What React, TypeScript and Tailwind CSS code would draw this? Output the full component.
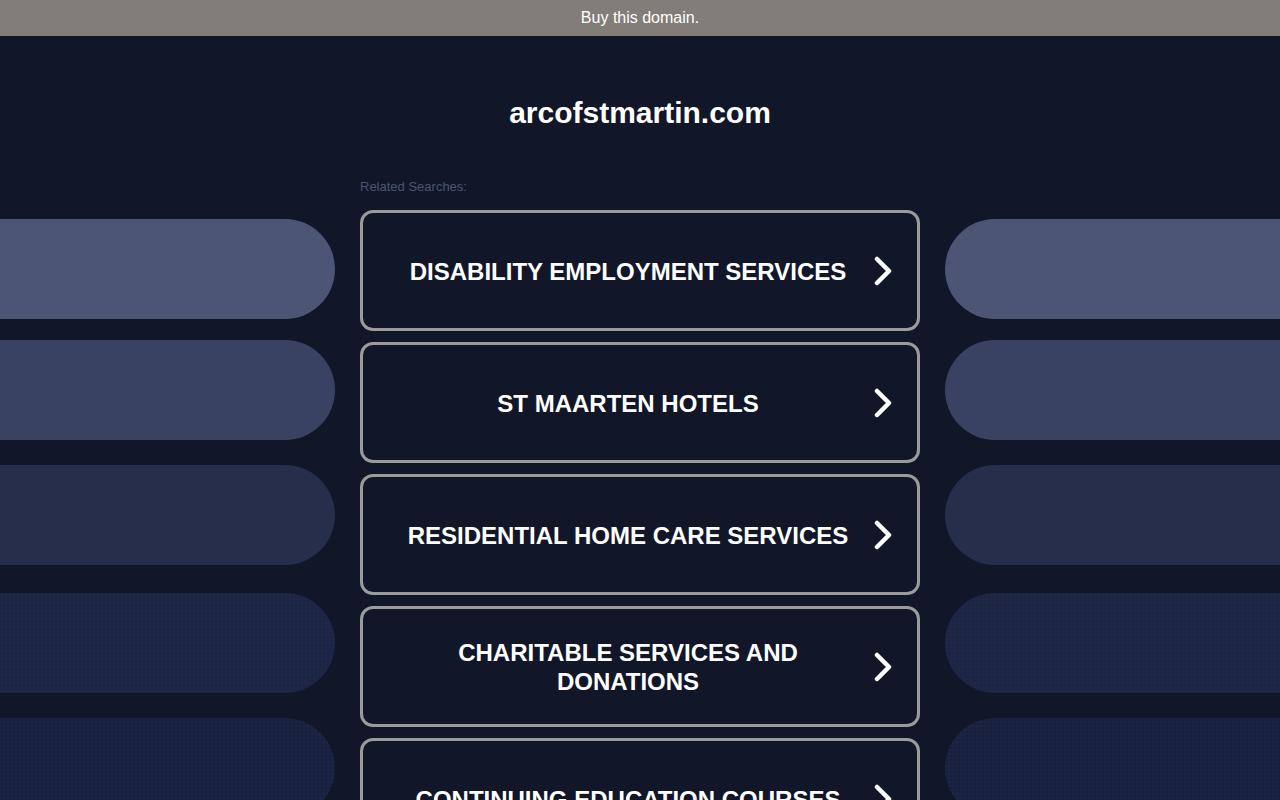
import React from "react";

const searches = [
  "DISABILITY EMPLOYMENT SERVICES",
  "ST MAARTEN HOTELS",
  "RESIDENTIAL HOME CARE SERVICES",
  "CHARITABLE SERVICES AND DONATIONS",
  "CONTINUING EDUCATION COURSES",
];

// side pills, top to bottom; spacing is uneven on purpose
const pills = [
  { mt: "mt-[40px]", bg: "bg-[#4c5674]" },
  { mt: "mt-[21px]", bg: "bg-[#3a4261]" },
  { mt: "mt-[25px]", bg: "bg-[#262e4c]" },
  {
    mt: "mt-[28px]",
    bg: "bg-[#1d2545] bg-[radial-gradient(#20284a_1px,transparent_1px)] bg-[length:4px_4px]",
  },
  {
    mt: "mt-[25px]",
    bg: "bg-[#1c2444] bg-[radial-gradient(#171e3a_1px,transparent_1px)] bg-[length:4px_4px]",
  },
];

const Chevron = () => (
  <svg width="20" height="30" viewBox="0 0 20 30" className="shrink-0">
    <polyline
      points="4,3 16,15 4,27"
      fill="none"
      stroke="white"
      strokeWidth="4.5"
      strokeLinecap="round"
      strokeLinejoin="round"
    />
  </svg>
);

const SideColumn = ({ side }: { side: "left" | "right" }) => (
  <div className="flex flex-col">
    {pills.map((p, i) => (
      <div
        key={i}
        className={`${p.mt} ${p.bg} h-[100px] shrink-0 ${
          side === "left" ? "rounded-r-[50px]" : "rounded-l-[50px]"
        }`}
      />
    ))}
  </div>
);

export default function App() {
  return (
    <div
      className="min-h-screen bg-[#111729] overflow-hidden"
      style={{ fontFamily: '"Liberation Sans", Arial, sans-serif' }}
    >
      <div className="h-[36px] bg-[#827d78] flex items-center justify-center pb-[1px]">
        <a className="text-white text-[16px] leading-none">Buy this domain.</a>
      </div>

      <h1 className="mt-[58px] text-center text-white font-bold text-[30px] leading-[38px]">
        arcofstmartin.com
      </h1>

      <div className="mt-[47px] grid grid-cols-[1fr_560px_1fr] gap-x-[25px]">
        <SideColumn side="left" />

        <div className="flex flex-col">
          <p className="text-[13px] leading-[16px] text-[#4b5474]">Related Searches:</p>
          <div className="mt-[15px] flex flex-col gap-[11px]">
            {searches.map((s) => (
              <a
                key={s}
                className="h-[121px] rounded-[13px] border-[3px] border-[#9b9b9b] flex items-center pl-[31px] pr-[24px] gap-[11px] pt-[1px]"
              >
                <span className="flex-1 text-center text-white font-bold text-[24px] leading-[29px]">
                  {s}
                </span>
                <Chevron />
              </a>
            ))}
          </div>
        </div>

        <SideColumn side="right" />
      </div>
    </div>
  );
}
